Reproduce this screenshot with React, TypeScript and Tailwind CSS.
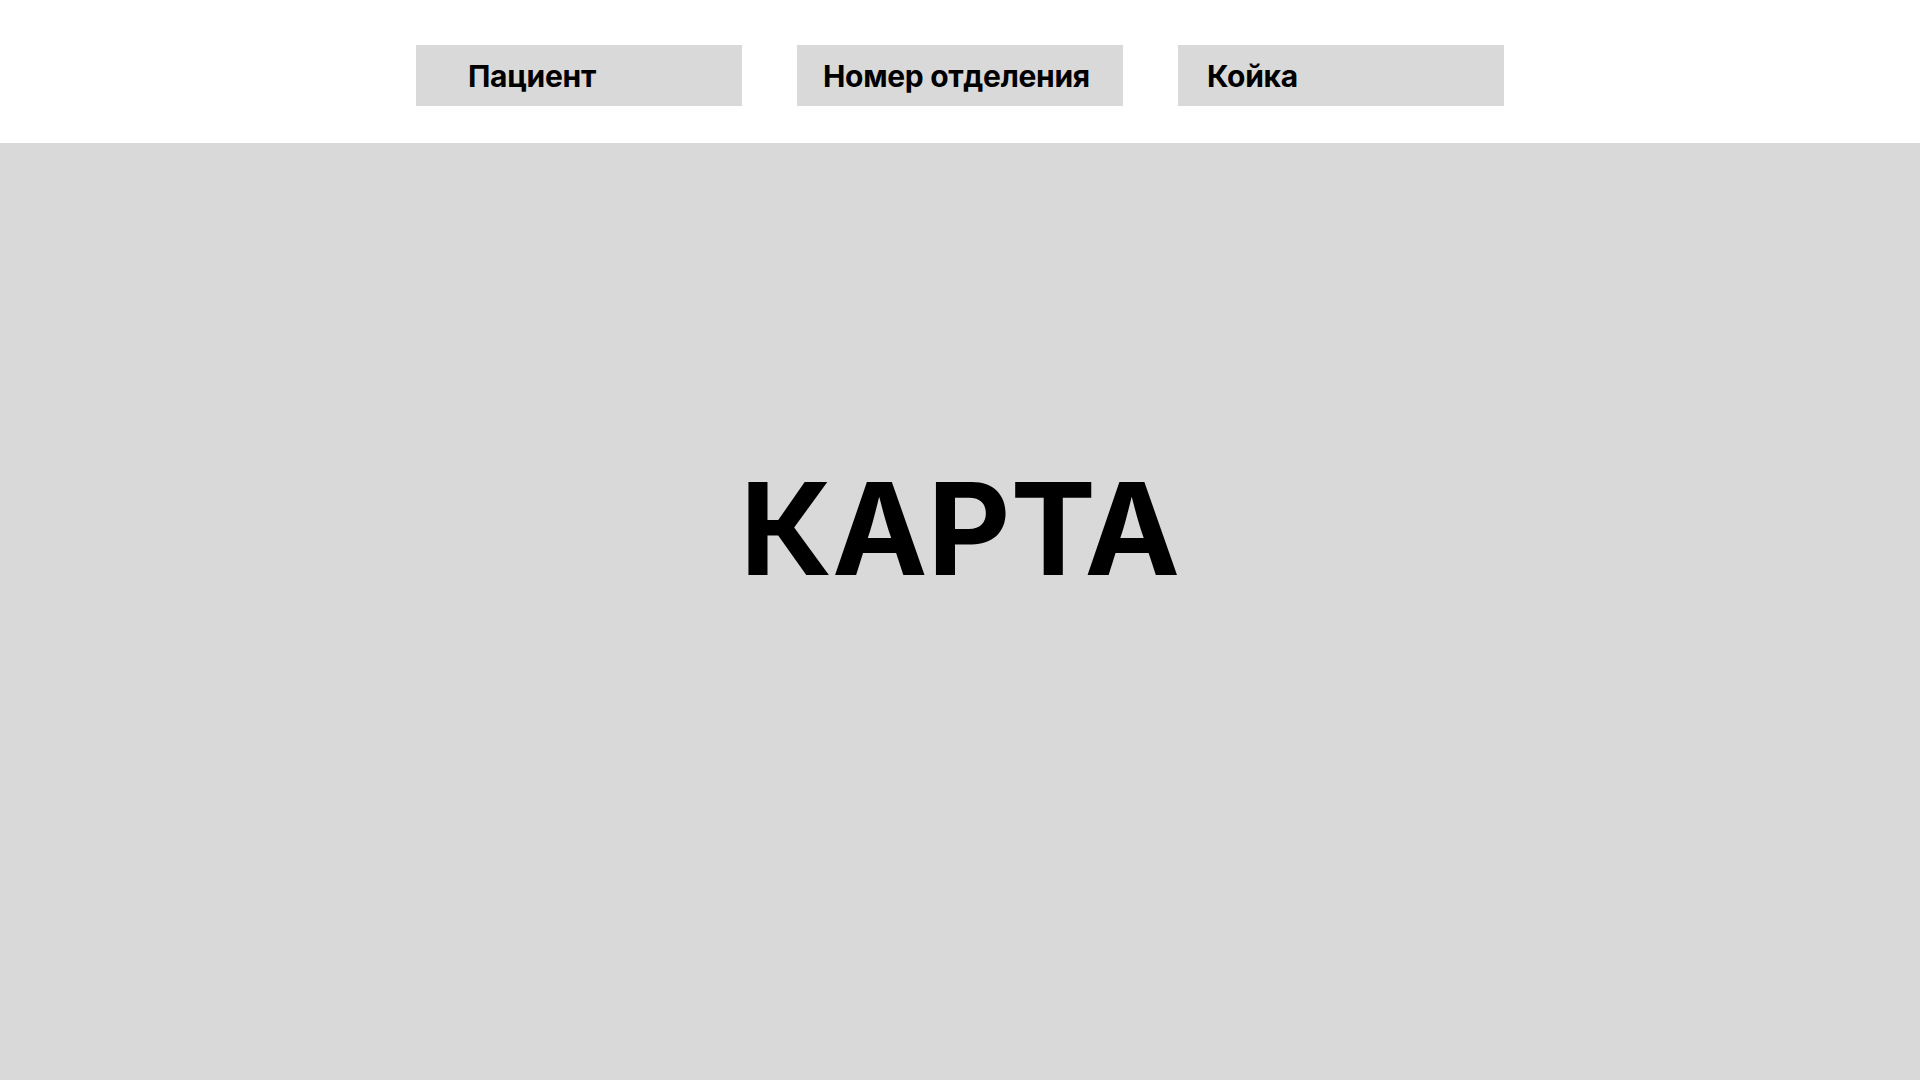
export default function App() {
  const tabs = [
    { label: 'Пациент', pad: 'pl-[52px]' },
    { label: 'Номер отделения', pad: 'pl-[26px]' },
    { label: 'Койка', pad: 'pl-[29px]' },
  ];

  return (
    <div className="flex h-screen w-full flex-col bg-white font-['Inter',sans-serif] text-black">
      <header className="flex h-[143px] shrink-0 justify-center gap-[55px] pt-[45px]">
        {tabs.map((tab) => (
          <div
            key={tab.label}
            className={`flex h-[61px] w-[326px] items-center bg-[#d9d9d9] ${tab.pad}`}
          >
            <span className="translate-y-[1px] text-[30px] font-bold tracking-[-0.01em]">{tab.label}</span>
          </div>
        ))}
      </header>

      <main className="flex flex-1 justify-center bg-[#d9d9d9] pt-[308px]">
        <h1 className="text-[128px] font-bold leading-[155px]">КАРТА</h1>
      </main>
    </div>
  );
}
